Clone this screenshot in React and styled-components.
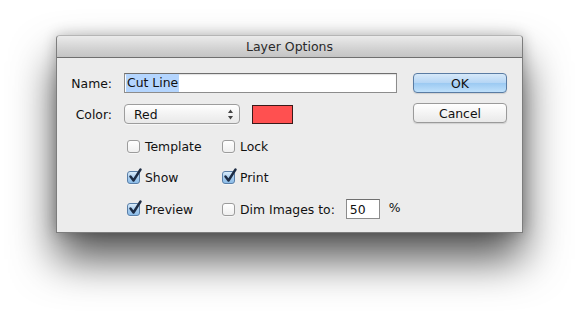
import React from 'react';
import styled, { createGlobalStyle } from 'styled-components';

const Global = createGlobalStyle`
  html, body { margin: 0; padding: 0; background: #ffffff; }
  body {
    font-family: "DejaVu Sans", "Liberation Sans", sans-serif;
    font-size: 12.4px;
    color: #111;
  }
`;

const Stage = styled.div`
  width: 580px;
  height: 312px;
  padding: 35px 0 0 56px;
  box-sizing: border-box;
  overflow: hidden;
`;

const Window = styled.div`
  width: 467px;
  height: 198px;
  box-sizing: border-box;
  background: #ececec;
  border: 1px solid #7d7d7d;
  border-top-color: #b5b5b5;
  border-radius: 4px 4px 0 0;
  box-shadow: 0 26px 44px rgba(0, 0, 0, 0.68), 0 0 14px rgba(0, 0, 0, 0.24);
  display: flex;
  flex-direction: column;
`;

const TitleBar = styled.div`
  height: 21px;
  flex: none;
  background: linear-gradient(#ebebeb, #d2d2d2 60%, #c4c4c4);
  border-bottom: 1px solid #6f6f6f;
  border-radius: 4px 4px 0 0;
  display: flex;
  align-items: center;
  justify-content: center;
  font-size: 12.5px;
  color: #2a2a2a;
`;

const Body = styled.div`
  flex: 1;
  display: flex;
  padding: 15px 15px 0 0;
`;

const Form = styled.div`
  flex: 1;
  display: flex;
  flex-direction: column;
`;

const Row = styled.div`
  display: flex;
  align-items: center;
  height: 20px;
  margin-bottom: ${p => p.$gap || 0}px;
`;

const Label = styled.div`
  width: 55px;
  text-align: right;
  margin-right: 12px;
`;

const TextInput = styled.div`
  width: 273px;
  height: 20px;
  box-sizing: border-box;
  background: #fff;
  border: 1px solid #8c8c8c;
  border-top-color: #6f6f6f;
  box-shadow: inset 0 1px 1px rgba(0, 0, 0, 0.12);
  display: flex;
  align-items: center;
  padding-left: 1px;
`;

const Selected = styled.span`
  background: #b4d5fe;
  padding: 1px 1px;
  line-height: 16px;
`;

const Select = styled.div`
  width: 116px;
  height: 20px;
  box-sizing: border-box;
  border: 1px solid #9d9d9d;
  border-radius: 4px;
  background: linear-gradient(#ffffff, #f3f3f3 50%, #e9e9e9);
  box-shadow: 0 1px 0 rgba(255, 255, 255, 0.6);
  display: flex;
  align-items: center;
  justify-content: space-between;
  padding: 0 5px 0 9px;
`;

const Stepper = styled.svg`
  width: 7px;
  height: 11px;
`;

const Swatch = styled.div`
  width: 41px;
  height: 19px;
  box-sizing: border-box;
  margin-left: 12px;
  background: #ff5050;
  border: 1px solid #3a1a1a;
`;

const CheckGrid = styled.div`
  display: grid;
  grid-template-columns: 95px auto;
  grid-auto-rows: 20px;
  row-gap: 11.5px;
  margin: 12px 0 0 70px;
  align-items: center;
`;

const CheckItem = styled.label`
  display: flex;
  align-items: center;
  gap: 5px;
`;

const Box = styled.span`
  position: relative;
  width: 13px;
  height: 13px;
  box-sizing: border-box;
  border-radius: 3px;
  border: 1px solid ${p => (p.$on ? '#5a7fa8' : '#9c9c9c')};
  background: ${p => (p.$on
    ? 'linear-gradient(#d9ecfb, #a9cdee 50%, #8cbde9)'
    : 'linear-gradient(#ffffff, #efefef)')};
  box-shadow: 0 1px 0 rgba(255, 255, 255, 0.5);
  flex: none;
`;

const Tick = styled.svg`
  position: absolute;
  left: 0px;
  top: -4px;
  width: 14px;
  height: 15px;
`;

const SmallInput = styled.div`
  width: 34px;
  height: 20px;
  box-sizing: border-box;
  margin-left: 11px;
  background: #fff;
  border: 1px solid #8c8c8c;
  border-top-color: #6f6f6f;
  display: flex;
  align-items: center;
  padding-left: 3px;
`;

const Percent = styled.span`
  margin-left: 9px;
  margin-top: -4px;
`;

const Buttons = styled.div`
  width: 94px;
  display: flex;
  flex-direction: column;
  gap: 10px;
`;

const Button = styled.div`
  height: 20px;
  box-sizing: border-box;
  border-radius: 4px;
  display: flex;
  align-items: center;
  justify-content: center;
  border: 1px solid ${p => (p.$primary ? '#5a7ca3' : '#9a9a9a')};
  background: ${p => (p.$primary
    ? 'linear-gradient(#d7e9f9, #b6d6f5 48%, #9ccaf2 52%, #bfe0fb)'
    : 'linear-gradient(#ffffff, #f4f4f4 50%, #e9e9e9)')};
  box-shadow: 0 1px 1px rgba(0, 0, 0, 0.12);
`;

function Check({ on, children }) {
  return (
    <CheckItem>
      <Box $on={on}>
        {on && (
          <Tick viewBox="0 0 14 15">
            <path d="M2.5 8.5 L5.5 12.5 L12.5 1.5" fill="none" stroke="#1d2c44" strokeWidth="2.4" strokeLinecap="round" strokeLinejoin="round" />
          </Tick>
        )}
      </Box>
      {children}
    </CheckItem>
  );
}

export default function App() {
  return (
    <Stage>
      <Global />
      <Window>
        <TitleBar>Layer Options</TitleBar>
        <Body>
          <Form>
            <Row $gap={11}>
              <Label>Name:</Label>
              <TextInput><Selected>Cut Line</Selected></TextInput>
            </Row>
            <Row>
              <Label>Color:</Label>
              <Select>
                Red
                <Stepper viewBox="0 0 7 11">
                  <path d="M3.5 0.5 L6 4 L1 4 Z" fill="#444" />
                  <path d="M3.5 10.5 L6 7 L1 7 Z" fill="#444" />
                </Stepper>
              </Select>
              <Swatch />
            </Row>
            <CheckGrid>
              <Check>Template</Check>
              <Check>Lock</Check>
              <Check on>Show</Check>
              <Check on>Print</Check>
              <Check on>Preview</Check>
              <Row>
                <Check>Dim Images to:</Check>
                <SmallInput>50</SmallInput>
                <Percent>%</Percent>
              </Row>
            </CheckGrid>
          </Form>
          <Buttons>
            <Button $primary>OK</Button>
            <Button>Cancel</Button>
          </Buttons>
        </Body>
      </Window>
    </Stage>
  );
}
